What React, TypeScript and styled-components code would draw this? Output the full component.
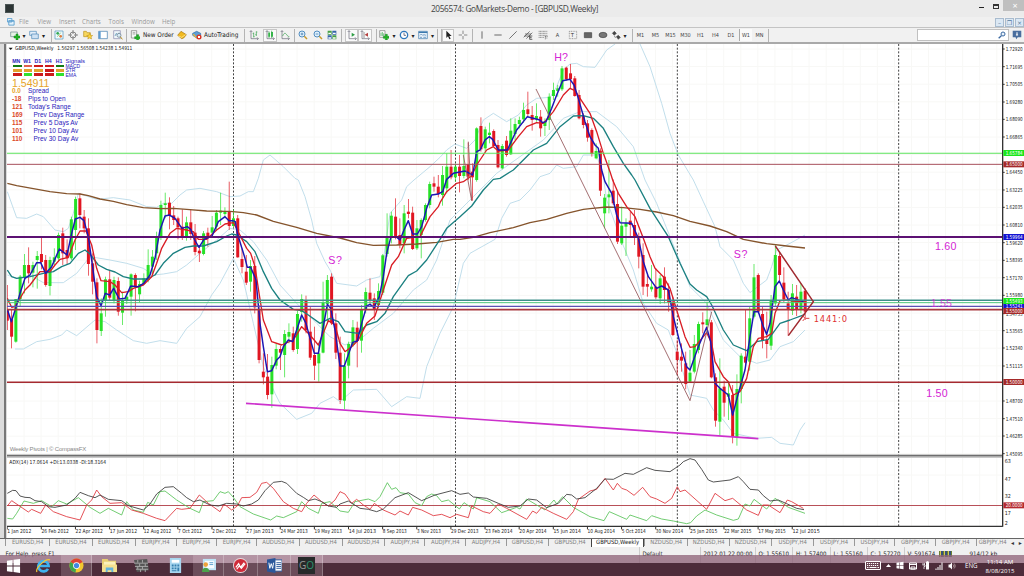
import React from 'react';
import styled, { createGlobalStyle } from 'styled-components';

type Bar = [number, number, number, number, number];
type Run = [number, number, string];

// chart units: 3 per css pixel
const STEP = 12.8;
const FIRST_BAR = 22;

// up(1)/down(0), high, body top, body bottom, low
const barRuns: { base: number; bars: Bar[] }[] = [
    {
        base: 450,
        bars: [
            [0, 405, 478, 512, 540], [0, 480, 508, 560, 595], [1, 447, 447, 575, 578], [1, 375, 380, 447, 468],
            [1, 312, 345, 382, 430], [0, 292, 345, 370, 400], [1, 335, 345, 368, 412], [1, 303, 318, 330, 416],
            [0, 263, 312, 336, 358], [0, 315, 330, 405, 410], [1, 320, 330, 408, 436], [1, 295, 322, 335, 345],
            [1, 248, 255, 325, 335], [0, 233, 250, 310, 345], [0, 268, 300, 325, 345], [1, 200, 208, 325, 330],
            [1, 140, 147, 240, 300], [0, 130, 145, 195, 235], [0, 180, 200, 235, 250], [0, 205, 235, 342, 377],
            [0, 310, 340, 395, 433], [0, 385, 397, 540, 580], [1, 445, 490, 543, 558], [1, 380, 388, 450, 500],
            [0, 362, 388, 443, 450], [1, 380, 390, 450, 460], [0, 382, 393, 485, 497], [1, 425, 450, 488, 525],
            [1, 430, 440, 450, 462], [1, 370, 373, 440, 497], [0, 370, 375, 412, 484], [1, 392, 402, 433, 458],
            [1, 370, 385, 402, 405], [1, 298, 345, 390, 397], [1, 300, 320, 350, 372], [1, 245, 262, 310, 330],
            [1, 152, 165, 262, 270], [1, 128, 160, 165, 205], [0, 142, 158, 195, 238], [0, 168, 196, 210, 225],
            [0, 200, 205, 232, 268], [0, 178, 230, 262, 270], [1, 200, 217, 262, 272], [0, 180, 217, 252, 270],
            [0, 222, 248, 306, 316], [0, 285, 302, 310, 336], [1, 243, 250, 312, 316], [0, 233, 248, 260, 290],
            [1, 198, 232, 248, 262], [1, 180, 188, 230, 240], [1, 128, 182, 188, 225], [1, 172, 186, 192, 205],
            [0, 95, 186, 228, 240], [1, 178, 205, 228, 232], [0, 195, 205, 322, 323],
        ],
    },
    {
        base: 540,
        bars: [
            [0, 205, 237, 261, 280], [0, 225, 275, 308, 315], [1, 240, 258, 305, 335], [0, 228, 258, 382, 400],
            [0, 375, 390, 540, 550], [0, 520, 575, 592, 613], [0, 522, 590, 645, 658], [1, 530, 555, 643, 683],
            [1, 490, 507, 557, 568], [0, 497, 507, 518, 570], [1, 450, 462, 525, 592], [1, 430, 456, 470, 490],
            [0, 440, 460, 510, 515], [1, 392, 402, 507, 522], [1, 343, 357, 396, 425], [0, 347, 362, 450, 460],
            [0, 380, 455, 533, 540], [0, 440, 525, 557, 600], [1, 490, 520, 550, 605], [1, 305, 367, 518, 520],
            [1, 285, 300, 372, 430], [0, 280, 290, 430, 435], [0, 400, 430, 518, 537], [0, 470, 518, 660, 672],
            [1, 520, 557, 662, 688], [1, 485, 492, 557, 595], [1, 420, 442, 495, 500], [0, 425, 443, 483, 562],
            [1, 375, 388, 482, 518], [1, 323, 336, 390, 400], [0, 295, 338, 360, 372], [0, 340, 355, 390, 420],
            [1, 310, 333, 375, 385], [1, 222, 226, 338, 345], [1, 100, 170, 222, 230], [1, 95, 107, 170, 190],
            [0, 55, 110, 168, 178], [0, 115, 165, 195, 205], [1, 75, 100, 190, 220], [0, 57, 95, 102, 115],
            [0, 80, 98, 207, 210], [1, 120, 145, 205, 210], [1, 115, 120, 165, 235], [1, 70, 75, 120, 125],
            [1, 5, 12, 75, 85], [0, -10, 10, 20, 35], [0, -15, 20, 42, 52],
        ],
    },
    {
        base: 120,
        bars: [
            [1, 378, 405, 465, 497], [1, 340, 380, 445, 460], [0, 330, 380, 412, 418], [1, 370, 380, 412, 425],
            [0, 345, 380, 408, 457], [1, 298, 378, 408, 415], [0, 308, 372, 410, 420], [0, 370, 395, 412, 482],
            [1, 262, 265, 420, 425], [0, 232, 258, 328, 335], [1, 260, 268, 325, 335], [1, 248, 278, 285, 310],
            [0, 268, 273, 318, 320], [0, 300, 315, 382, 385], [1, 312, 318, 385, 388], [0, 288, 302, 345, 350],
            [1, 235, 272, 343, 345], [1, 235, 252, 282, 300], [1, 230, 240, 252, 265], [1, 188, 210, 238, 248],
            [0, 155, 208, 222, 230], [0, 198, 225, 240, 272], [1, 190, 228, 238, 245], [0, 210, 230, 265, 290],
            [1, 235, 245, 258, 288], [1, 160, 170, 240, 270], [1, 128, 150, 168, 180], [1, 135, 145, 153, 170],
            [1, 78, 85, 148, 153], [0, 80, 83, 118, 122], [0, 72, 100, 118, 145], [0, 108, 115, 168, 170],
            [0, 150, 165, 235, 238], [0, 220, 228, 255, 265], [0, 240, 250, 293, 305], [0, 265, 270, 342, 350],
            [1, 310, 333, 355, 358], [0, 325, 332, 452, 468], [1, 462, 473, 520, 565], [1, 360, 463, 472, 520],
            [0, 418, 452, 490, 495],
        ],
    },
    {
        base: 540,
        bars: [
            [0, 32, 72, 185, 192], [1, 80, 137, 190, 195], [1, 115, 130, 140, 228], [0, 95, 122, 135, 170],
            [0, 90, 135, 168, 195], [0, 158, 175, 230, 265], [0, 190, 225, 320, 345], [0, 285, 312, 320, 350],
            [1, 255, 320, 328, 335], [0, 265, 320, 352, 358], [1, 285, 295, 355, 372], [0, 262, 290, 330, 370],
            [0, 310, 330, 367, 395], [0, 350, 365, 465, 468], [0, 480, 515, 540, 585], [0, 490, 530, 542, 575],
            [0, 515, 550, 612, 628], [1, 510, 578, 605, 608], [1, 465, 492, 575, 580], [1, 425, 432, 510, 520],
            [0, 397, 427, 433, 460], [1, 365, 418, 435, 460], [0, 420, 427, 592, 595], [0, 580, 592, 722, 740],
            [1, 535, 625, 725, 768], [0, 602, 620, 668, 710], [1, 605, 640, 650, 720], [0, 615, 645, 770, 790],
            [1, 583, 627, 772, 797], [1, 520, 527, 627, 670], [0, 390, 530, 548, 560], [1, 380, 415, 545, 572],
            [1, 252, 292, 410, 415], [0, 280, 285, 395, 400], [0, 380, 402, 482, 505], [0, 395, 480, 492, 535],
            [1, 345, 362, 497, 510], [1, 195, 225, 370, 378], [0, 215, 228, 285, 308], [0, 262, 308, 358, 367],
            [0, 335, 370, 390, 467], [1, 312, 340, 392, 405], [0, 315, 350, 390, 408], [1, 310, 335, 390, 400],
            [0, 325, 332, 395, 420],
        ],
    },
];

const brown: Run[] = [
    [0, 450, '22,100 50,107 100,116 150,125 200,131 240,132 265,137 300,147 340,154 380,164 430,173 480,176 520,175 560,178 620,183 680,184'],
    [690, 540, '0,94 40,98 80,105 130,124 200,142 260,160 330,174 380,188 430,196 500,195 560,192 620,187 670,178'],
    [1320, 120, '60,598 100,592 150,578 220,563 270,548 320,538 380,520 430,508'],
    [1770, 540, '0,86 50,81 100,83 150,88 200,96 250,107 300,124 360,138 410,155 460,178 530,191 590,198 645,204'],
];
const teal: Run[] = [
    [0, 450, '22,360 35,380 50,385 90,380 130,370 160,365 185,350 210,340 235,310 255,300 270,312 295,345 320,358 345,366 370,380 400,387 440,387 465,375 490,340 520,310 555,292 580,288 610,288 650,275 680,258'],
    [690, 540, '5,162 20,165 50,185 75,215 100,275 125,325 150,360 190,388 215,392 235,405 270,430 300,415 325,425 345,455 385,460 410,435 440,425 465,400 490,350 535,287 560,273 590,240'],
    [1320, 120, '0,598 20,565 60,530 95,498 130,450 160,418 180,415 220,390 250,360 280,330 320,310 360,260 400,228 430,227 460,235 490,265 520,320 550,370 575,405'],
    [1770, 540, '135,0 180,85 235,170 270,250 300,312 320,330 350,350 365,375 400,450 430,495 470,512 500,485 535,478 570,430 600,420 645,403'],
];
const red: Run[] = [
    [0, 450, '22,445 35,472 45,470 60,445 75,420 90,405 120,365 150,365 165,345 180,328 205,322 225,270 240,243 258,243 275,285 290,355 303,392 330,395 345,405 365,428 385,425 400,415 430,405 455,380 470,340 485,295 510,250 530,235 560,240 580,245 595,268 620,268 650,240 675,222 700,218 712,240 740,295 752,310 765,350'],
    [690, 540, '88,345 100,420 125,485 155,495 190,480 215,440 240,465 265,495 295,422 315,435 330,490 345,515 365,500 385,480 410,430 435,408 460,330 485,255 505,230 530,175 570,170 600,110 625,80'],
    [1320, 120, '0,488 20,455 50,430 70,425 95,407 110,375 140,330 160,320 175,333 205,330 235,290 260,260 290,248 310,250 340,215 370,165 390,145 405,152 430,190 450,220 470,275 490,340 510,395'],
    [1770, 540, '68,0 85,40 110,80 135,110 160,175 180,230 195,265 220,290 240,325 260,390 285,470 300,502 315,500 350,458 365,490 375,545 400,590 415,605 430,645 450,635 470,595 490,500 505,475 530,470 545,460 555,400 570,362 590,360 620,365 645,365'],
];
const blue: Run[] = [
    [0, 450, '22,478 34,515 47,475 60,430 75,385 90,375 110,338 122,338 137,370 155,350 178,297 201,315 215,250 226,207 240,202 252,212 265,260 277,345 290,440 303,467 316,430 329,435 341,415 358,447 375,445 392,408 415,410 431,400 450,375 465,325 480,240 495,198 508,195 525,205 546,235 562,230 572,238 584,270 597,292 612,268 636,258 655,215 675,200 687,212 698,212'],
    [690, 540, '16,125 22,160 45,235 52,262 62,262 78,300 90,430 100,500 112,575 125,572 140,540 150,530 160,500 175,480 188,485 200,450 215,405 228,430 240,475 253,520 265,520 280,440 292,373 302,385 315,450 330,558 343,558 368,487 382,483 395,430 410,378 420,373 432,382 448,350 460,290 470,220 483,170 498,170 510,180 522,150 535,122 548,162 562,162 575,140 590,85 605,45 625,42'],
    [1320, 120, '8,455 20,418 40,400 75,393 98,405 110,335 120,330 135,300 148,290 158,298 175,330 202,330 230,270 262,230 300,240 308,248 318,245 335,205 350,165 368,122 390,118 402,135 415,175 435,245 450,290 465,315 475,325 485,390'],
    [1770, 540, '45,5 65,40 80,105 90,128 125,130 145,175 160,245 175,290 200,325 215,318 235,330 250,410 270,490 290,560 300,570 325,500 350,442 362,485 375,610 390,625 415,645 428,705 445,640 465,570 480,470 492,395 505,395 520,440 530,463 540,430 555,320 568,303 580,330 595,360 605,353 640,365'],
];
const upperBand: Run[] = [
    [0, 450, '22,125 50,203 80,205 110,192 130,200 165,240 190,245 205,235 220,190 235,130 290,148 340,143 390,150 440,170 470,172 490,160 515,160 540,135 560,120 600,115 650,125 690,140 720,138 745,125 760,125 775,85 790,30 810,15 850,50 885,85'],
    [690, 540, '205,0 225,50 245,120 260,190 285,245 300,270 320,310 380,318 410,300 450,290 460,240 470,170 480,100 515,60 530,20 552,0'],
    [1320, 120, '-30,380 0,352 20,330 45,312 80,325 105,300 130,240 160,220 200,245 235,225 260,195 290,175 330,172 350,140 370,90 390,72 410,70 430,80 465,82 480,60 500,30 525,12 560,-20 600,12 630,80 665,190 690,280 715,345'],
    [1770, 540, '310,0 340,65 375,140 390,200 430,240 460,310 480,338 510,315 530,300 545,260 560,210 600,190 645,165'],
];
const middleBand: Run[] = [
    [0, 450, '22,375 50,385 90,375 130,398 190,398 230,370 270,320 330,330 380,340 430,355 460,375 490,372 530,365 560,345 600,310 650,270 690,235'],
    [690, 540, '30,150 70,185 110,240 150,315 200,370 260,430 300,470 345,495 400,470 430,445 490,400 550,330 590,300 620,240'],
    [1320, 120, '30,540 100,470 170,400 240,350 310,300 370,235 420,215 470,215 530,260 580,320'],
    [1770, 540, '165,0 200,70 240,170 300,320 350,370 400,480 450,530 500,550 540,540 570,500 610,485 645,450'],
];
const lowerBand: Run[] = [
    [0, 450, '45,597 70,597 110,575 150,568 185,555 200,540 230,557 285,510 315,515 350,540 400,572 440,580 480,572 530,580 560,535 600,500 635,435 660,400 700,325'],
    [690, 540, '40,300 70,430 100,560 135,640 150,670 200,718 245,700 270,670 310,650 330,665 370,630 440,628 485,680 530,650 570,655 590,560 630,460 670,380 700,250 720,220'],
    [1320, 120, '165,598 185,535 210,490 240,480 270,450 300,410 330,400 350,375 370,385 410,380 430,345 470,345 490,410 500,480'],
    [1770, 540, '95,185 130,270 160,370 200,430 235,450 265,530 300,645 350,655 370,690 400,720 430,760 500,775 545,772 570,790 610,795 630,750 645,728'],
];
const adxMain: Run[] = [
    [0, 1290, '22,190 38,181 48,182 60,198 75,202 90,203 105,212 125,215 145,230 165,232 200,225 225,205 240,187 265,197 285,203 300,195 325,208 365,212 385,227 430,240 450,222 470,192 495,172 520,170 545,190 560,203 580,215 600,210 630,225 655,228 680,220 710,222 730,228 755,222 775,210 795,182 820,157 845,154 860,160 890,190 910,202 925,212 945,207 965,215 985,228 1010,232'],
    [1020, 1290, '0,222 25,213 60,235 85,238 110,245 130,237 165,203 205,188 245,212 285,195 335,182 360,193 385,189 400,201 440,205 475,220 505,232 540,228 565,207 590,210 620,233 655,220 680,193 695,195 710,207 735,203 770,175 795,147 820,148 855,130 880,133 920,113 945,121 990,125 1020,105'],
    [2040, 1290, '10,95 30,86 45,90 65,118 85,150 100,156 150,150 175,140 190,155 210,178 235,180 250,197 270,213 295,210 320,221 350,235 372,239'],
];
const adxMinus: Run[] = [
    [0, 1290, '22,228 35,212 85,246 95,238 122,250 137,225 160,245 200,260 240,270 260,225 275,210 290,180 305,200 330,220 365,218 395,240 430,250 470,265 495,272 530,235 545,238 570,235 598,195 625,220 660,245 672,222 695,240 712,228 725,203 750,202 770,187 785,160 800,157 820,175 850,215 880,235 905,245 920,220 942,195 965,215 985,228 1005,210'],
    [1020, 1290, '0,185 15,192 35,220 50,208 70,225 90,238 103,220 130,240 165,255 180,243 205,255 218,232 245,240 280,257 305,253 330,263 350,253 385,263 395,228 430,245 450,250 475,222 500,235 560,268 578,243 590,250 605,232 640,250 680,268 700,245 715,208 750,183 770,178 795,145 820,180 832,160 845,175 860,180 882,196 908,172 930,200 950,207 975,220 995,205 1012,170'],
    [2040, 1290, '0,185 15,180 80,238 105,190 135,212 158,205 200,240 235,256 248,225 265,225 300,248 322,210 335,215 370,235'],
];
const adxPlus: Run[] = [
    [0, 1290, '22,265 38,267 50,250 72,213 100,220 125,212 155,230 175,212 200,222 235,203 270,232 300,250 325,235 365,255 380,215 400,240 430,247 443,217 460,225 480,185 495,183 530,210 570,235 598,248 610,215 640,212 660,185 675,190 685,185 700,202 720,230 760,252 812,270 830,258 850,263 890,245 905,215 925,235 955,250 965,220 990,215'],
    [1020, 1290, '0,243 25,247 45,215 85,207 105,215 120,200 142,158 155,178 168,173 180,188 205,192 225,218 245,227 260,200 275,192 290,197 305,215 325,210 358,237 372,218 400,237 410,203 450,215 485,248 530,232 540,237 560,207 590,225 615,240 642,210 650,222 668,200 700,232 750,260 792,272 808,245 860,268 870,255 920,272 935,257 965,267 1000,273'],
    [2040, 1290, '0,277 20,281 32,278 50,258 75,240 110,255 160,271 175,267 195,222 210,228 222,208 260,237 285,205 325,232 375,250'],
];

const levels = [
    { y: 460, color: '#5be35b', w: 3.2 },
    { y: 493, color: '#a8505c', w: 3 },
    { y: 711, color: '#5c1173', w: 6 },
    { y: 901, color: '#3f8f8a', w: 4.5 },
    { y: 908, color: '#4fc77a', w: 3 },
    { y: 919, color: '#5b50b4', w: 3.5 },
    { y: 929, color: '#a8383e', w: 5 },
    { y: 1147, color: '#a52a30', w: 4.5 },
];

const prices: [string, number][] = [
    ['1.72920', 147], ['1.71695', 200], ['1.70505', 253], ['1.69280', 306], ['1.68090', 358], ['1.66865', 411],
    ['1.64450', 517], ['1.63225', 570], ['1.62035', 622], ['1.60810', 675], ['1.59620', 728], ['1.58395', 781],
    ['1.57170', 833], ['1.55980', 886], ['1.54755', 941], ['1.53565', 992], ['1.52340', 1044], ['1.51115', 1098],
    ['1.48700', 1203], ['1.47510', 1256], ['1.46285', 1308], ['1.45095', 1361],
];
const priceTags: [string, number, string][] = [
    ['1.65784', 459, '#1ae61a'], ['1.65000', 493, '#a52a2a'], ['1.59964', 711, '#1414d2'], ['1.55241', 919, '#1414d2'],
    ['1.55000', 933, '#a52a2a'], ['1.55493', 903, '#1ae61a'], ['1.50000', 1146, '#a52a2a'], ['20.0000', 1516, '#b52a30'],
];
const adxScale: [string, number][] = [['63', 1383], ['47', 1438], ['32', 1489], ['17', 1540], ['2', 1569]];

const dates = [
    '1 Jan 2012', '26 Feb 2012', '22 Apr 2012', '17 Jun 2012', '12 Aug 2012', '7 Oct 2012', '2 Dec 2012', '27 Jan 2013',
    '24 Mar 2013', '19 May 2013', '14 Jul 2013', '8 Sep 2013', '3 Nov 2013', '29 Dec 2013', '23 Feb 2014', '20 Apr 2014',
    '15 Jun 2014', '10 Aug 2014', '5 Oct 2014', '30 Nov 2014', '25 Jan 2015', '22 Mar 2015', '17 May 2015', '12 Jul 2015',
];

const menu: [string, number][] = [
    ['File', 18.5], ['View', 21.5], ['Insert', 23], ['Charts', 26.5], ['Tools', 23], ['Window', 30.5], ['Help', 20],
];

const tabs: [string, number][] = [
    ['EURUSD,H4', 44.3], ['EURUSD,H4', 42.4], ['EURUSD,H4', 43], ['EURJPY,H4', 41], ['EURJPY,H4', 40.3], ['EURJPY,H4', 40.3],
    ['AUDUSD,H4', 43], ['AUDUSD,H4', 42.4], ['AUDUSD,H4', 42.6], ['AUDJPY,H4', 40], ['AUDJPY,H4', 41], ['AUDJPY,H4', 40.4],
    ['GBPUSD,H4', 42.6], ['GBPUSD,H4', 42.7], ['GBPUSD,Weekly', 53.3], ['NZDUSD,H4', 43], ['NZDUSD,H4', 42], ['NZDUSD,H4', 42],
    ['USDJPY,H4', 42], ['USDJPY,H4', 40.7], ['USDJPY,H4', 40.3], ['GBPJPY,H4', 40.4], ['GBPJPY,H4', 41], ['GBPJPY,H4', 33],
];

const signalColors = [
    ['#137a13', '#e0604c', '#cc1a1a', '#cc1a1a', '#137a13'],
    ['#e3a02c', '#e3a02c', '#e3a02c', '#cc1a1a', '#e3a02c'],
    ['#cc1a1a', '#2fe02f', '#cc1a1a', '#cc1a1a', '#2fe02f'],
];
const stats: [string, string, number][] = [
    ['0.0', 'Spread', 0], ['-18', 'Pips to Open', 0], ['121', "Today's Range", 0], ['169', 'Prev Days Range', 1],
    ['115', 'Prev 5 Days Av', 1], ['101', 'Prev 10 Day Av', 1], ['110', 'Prev 30 Day Av', 1],
];

const joinRuns = (runs: Run[]) =>
    runs
        .map(([dx, dy, pts]) =>
            pts.split(' ').map((p) => {
                const [x, y] = p.split(',').map(Number);
                return `${x + dx},${y + dy}`;
            }).join(' '))
        .join(' ');

const allBars = barRuns.flatMap(({ base, bars }) =>
    bars.map(([up, ...ys]) => ({ up, ys: ys.map((y) => y + base) })));

function Trace({ runs, color, width }: { runs: Run[]; color: string; width: number }) {
    return <polyline points={joinRuns(runs)} fill="none" stroke={color} strokeWidth={width} strokeLinejoin="round" />;
}

function Chart() {
    return (
        <ChartSvg viewBox="21 132 3051 1482">
            <defs>
                <clipPath id="main"><rect x="21" y="132" width="2985" height="1236" /></clipPath>
            </defs>
            <rect x="21" y="132" width="3051" height="1482" fill="#fff" />

            {Array.from({ length: 58 }, (_, i) => (
                <line key={i} x1={72 + i * 51.2} x2={72 + i * 51.2} y1="132" y2="1578" stroke="#f8f8f6" strokeWidth="3" />
            ))}
            {Array.from({ length: 24 }, (_, i) => (
                <line key={i} x1="21" x2="3006" y1={147 + i * 52.8} y2={147 + i * 52.8} stroke="#f8f8f6" strokeWidth="3" />
            ))}
            <line x1="21" x2="3006" y1="1425" y2="1425" stroke="#f8f8f6" strokeWidth="3" />

            {[700.5, 1366.5, 2032, 2696].map((x) => (
                <line key={x} x1={x} x2={x} y1="132" y2="1578" stroke="#444" strokeWidth="3" strokeDasharray="6 5" />
            ))}

            <g clipPath="url(#main)">
                <Trace runs={upperBand} color="#bcdcea" width={2.8} />
                <Trace runs={middleBand} color="#bcdcea" width={2.8} />
                <Trace runs={lowerBand} color="#bcdcea" width={2.8} />
                {allBars.map(({ up, ys: [high, top, bottom, low] }, i) => {
                    const x = FIRST_BAR + i * STEP;
                    return (
                        <g key={i} fill={up ? '#27e027' : '#e01622'}>
                            <rect x={x - 1.2} y={high} width="2.4" height={low - high} opacity=".85" />
                            <rect x={x - 4.5} y={top} width="9" height={bottom - top} />
                        </g>
                    );
                })}
                <Trace runs={brown} color="#85542c" width={4.2} />
                <Trace runs={teal} color="#1b8080" width={4} />
                <Trace runs={red} color="#d91c24" width={4} />
                <Trace runs={blue} color="#1c16b4" width={4.4} />
            </g>

            {levels.map((l) => (
                <line key={l.y} x1="21" x2="3006" y1={l.y} y2={l.y} stroke={l.color} strokeWidth={l.w} />
            ))}

            <g fill="none" stroke="#96585c" strokeWidth="2.6">
                <polyline points="1608,267 2070,1202 2135,935" />
                <polyline points="1390,465 1415,602 1405,425" />
                <polyline points="2326,738 2440,905 2365,1007" stroke="#a02a30" strokeWidth="4.500" />
            </g>
            <line x1="738" y1="1210" x2="2275" y2="1316" stroke="#cc30cc" strokeWidth="4.800" />
            <path d="M2408 947l7 8-7 8M2418 955h10" fill="none" stroke="#d94040" strokeWidth="3" />

            <Note x="1663" y="183" textLength="41">H?</Note>
            <Note x="985" y="791" textLength="41">S?</Note>
            <Note x="2201" y="773" textLength="41">S?</Note>
            <Note x="2805" y="751" textLength="64">1.60</Note>
            <Note x="2792" y="921" textLength="64" style={{ opacity: 0.75 }}>1.55</Note>
            <Note x="2779" y="1190" textLength="64">1.50</Note>
            <Countdown x="2441" y="966" textLength="100">1441:0</Countdown>

            <rect x="21" y="1364" width="2987" height="6" fill="#6e6e6e" />
            <rect x="21" y="1370" width="2987" height="4" fill="#c9c9c9" />
            <line x1="21" x2="3006" y1="1516.500" y2="1516.500" stroke="#b85058" strokeWidth="3.500" />
            <Trace runs={adxPlus} color="#5cc45c" width={2.6} />
            <Trace runs={adxMinus} color="#e0363e" width={2.6} />
            <Trace runs={adxMain} color="#3a3a3a" width={2.6} />

            <path d="M3008 132V1580M21 1579H3008" stroke="#333" strokeWidth="4" fill="none" />
            {prices.map(([label, y]) => (
                <g key={label}>
                    <rect x="3008" y={y - 1.5} width="6" height="3" fill="#333" />
                    <Small x="3017" y={y + 6} textLength="51" lengthAdjust="spacingAndGlyphs">{label}</Small>
                </g>
            ))}
            {priceTags.map(([label, y, color]) => (
                <g key={label}>
                    <rect x="3010" y={y - 9} width="62" height="18" fill={color} />
                    <TagText x="3017" y={y + 6} textLength="51" lengthAdjust="spacingAndGlyphs">{label}</TagText>
                </g>
            ))}
            {adxScale.map(([label, y]) => (
                <Small key={label} x="3014" y={y + 6}>{label}</Small>
            ))}

            {dates.map((d, i) => (
                <g key={d}>
                    <rect x={20 + i * 102.4} y="1580" width="3" height="8" fill="#333" />
                    <Small x={22 + i * 102.4} y="1600" textLength={d.length === 11 ? 82 : 72} lengthAdjust="spacingAndGlyphs">{d}</Small>
                </g>
            ))}

            <path d="M26 143h12l-6 7z" fill="#111" />
            <Small x="45" y="151" textLength="116" lengthAdjust="spacingAndGlyphs">GBPUSD,Weekly</Small>
            <Small x="172" y="151" textLength="225" lengthAdjust="spacingAndGlyphs">1.56297 1.56508 1.54238 1.54911</Small>
            <Small x="28" y="1391" textLength="290" lengthAdjust="spacingAndGlyphs">ADX(14) 17.0614 +DI:13.0338 -DI:18.3164</Small>
            <Credit x="29" y="1354" textLength="230">Weekly Pivots | © CompassFX</Credit>
        </ChartSvg>
    );
}

function Signals() {
    return (
        <SignalsBox>
            <SignalRow>
                {['MN', 'W1', 'D1', 'H4', 'H1'].map((t) => <SignalHead key={t}>{t}</SignalHead>)}
                <SignalTitle>Signals</SignalTitle>
            </SignalRow>
            {['MACD', 'STR', 'EMA'].map((name, r) => (
                <SignalLine key={name}>
                    {signalColors[r].map((c, i) => <SignalChip key={i} $color={c} />)}
                    <SignalName>{name}</SignalName>
                </SignalLine>
            ))}
            <BigPrice>1.54911</BigPrice>
            {stats.map(([value, label, indent], i) => (
                <StatRow key={label}>
                    <StatValue $first={i === 0}>{value}</StatValue>
                    <StatLabel $indent={indent}>{label}</StatLabel>
                </StatRow>
            ))}
        </SignalsBox>
    );
}

const green = '#2f9e46';
const plus = <path d="M8 5h3v3h3v3h-3v3H8v-3H5V8h3z" fill="#22b322" stroke="#0d8420" strokeWidth=".7" />;
const axes = <path d="M3 1v12h11M1 3l2-2 2 2M12 11l2 2-2 2" fill="none" stroke="#667" strokeWidth="1" />;

const glyphs: Record<string, React.ReactNode> = {
    newChart: <><path d="M1 3h10v7H1z" fill="#e6f2e6" stroke="#688" /><g transform="translate(1 1)">{plus}</g></>,
    profiles: <><path d="M1 2h10v6H1z" fill="#e2eefa" stroke="#4a86b8" /><path d="M4 6h10v7H4z" fill="#cfe2f4" stroke="#4a86b8" /></>,
    market: <><path d="M1.500 1.500h12v12h-12z" fill="#f2fbff" stroke="#4a92b8" /><circle cx="5.500" cy="5" r="2" fill="#32a852" /><circle cx="10" cy="9.500" r="2" fill="#dd7a3a" /><path d="M5 10l5-6" stroke="#48b048" /></>,
    crosshair: <><circle cx="7.500" cy="7.500" r="4.500" fill="none" stroke="#555" /><path d="M7.500 0v6M7.500 9v6M0 7.500h6M9 7.500h6" stroke="#555" /></>,
    folder: <><path d="M1 2h4l1 2h5v6H1z" fill="#f7d65c" stroke="#b98f1c" /><path d="M10 5l1.300 3 3.200.3-2.500 2 .8 3.200L10 12l-2.800 1.500.8-3.200-2.500-2L8.700 8z" fill="#ffd53d" stroke="#b98f1c" strokeWidth=".8" /></>,
    terminal: <><path d="M1 2h13v11H1z" fill="#fff" stroke="#3b78ad" /><path d="M1 2h3v11H1z" fill="#5d9bd0" /></>,
    tester: <><path d="M1 1h10v12H1z" fill="#eef5fa" stroke="#88a" /><path d="M3 9l2-4 2 3 2-4" fill="none" stroke="#48a" /><circle cx="9" cy="8" r="3" fill="#d6ebf7" stroke="#678" /><path d="M11 10l3 4" stroke="#b98f1c" strokeWidth="1.500" /></>,
    order: <><path d="M2 1h8v11H2z" fill="#f5f8f5" stroke="#777" /><path d="M4 4h4M4 6h4" stroke="#888" /><g transform="translate(2 2)">{plus}</g></>,
    gold: <><path d="M1 8l5-6 8 5-4 5-3 1z" fill="#f1b91e" stroke="#a3720c" /><path d="M2 9l5 2 6-4" fill="none" stroke="#fff0a8" /></>,
    auto: <><path d="M1 5l6-3 6 3v3l-6 4-6-4z" fill="#5c9ed4" stroke="#2e6ca3" /><path d="M2 6c3 5 6 6 8 6" stroke="#e8b83b" strokeWidth="2" fill="none" /><circle cx="10.500" cy="10.500" r="3.800" fill="#d93324" /><path d="M9 9h3v3H9z" fill="#fff" /></>,
    bars: <>{axes}<path d="M7 4v7M5.500 5H7M7 10h1.500M11 2v7M9.500 7H11M11 3h1.500" stroke={green} fill="none" /></>,
    candle: <>{axes}<path d="M6 2v10M10 1v11" stroke={green} /><path d="M5 4h2.500v6H5zM9 3h3v7H9z" fill="#35b44a" /></>,
    line: <>{axes}<path d="M4 9c2-5 4-5 6-2 1 2 3 3 4 3" stroke={green} fill="none" /></>,
    zoomIn: <><circle cx="6" cy="6" r="4.500" fill="#dff0fd" stroke="#3e7fb8" strokeWidth="1.300" /><path d="M4 6h4M6 4v4" stroke="#2e6ca3" /><path d="M9.500 9.500l4 4" stroke="#c79a2c" strokeWidth="2.200" /></>,
    zoomOut: <><circle cx="6" cy="6" r="4.500" fill="#dff0fd" stroke="#3e7fb8" strokeWidth="1.300" /><path d="M4 6h4" stroke="#2e6ca3" /><path d="M9.500 9.500l4 4" stroke="#c79a2c" strokeWidth="2.200" /></>,
    tile: <><path d="M1 1h6v6H1zM8 8h6v6H8z" fill="#45a045" /><path d="M8 1h6v6H8zM1 8h6v6H1z" fill="#3467a8" /><path d="M2 4h4v2H2zM9 4h4v2H9zM2 11h4v2H2zM9 11h4v2H9z" fill="#fff" /></>,
    scroll: <>{axes}<path d="M7 4l5 3-5 3z" fill={green} /></>,
    shift: <>{axes}<path d="M12 4L7 7l5 3z" fill="#b64040" /><path d="M6 3v9" stroke="#666" /></>,
    indicator: <><path d="M1 1h8v10H1z" fill="#fff" stroke="#777" /><path d="M3 9V4M5 9V3M7 9V5" stroke={green} /><g transform="translate(1.500 1.500)">{plus}</g></>,
    clock: <><circle cx="7.500" cy="7.500" r="6.500" fill="#2f77bc" /><circle cx="7.500" cy="7.500" r="4.500" fill="#fff" /><path d="M7.500 4v4h3" stroke="#335" fill="none" /></>,
    template: <><path d="M1 2h13v11H1z" fill="#e8f2fa" stroke="#3b78ad" /><path d="M1 3.500h13" stroke="#3b78ad" strokeWidth="2" /><path d="M3 8l2-2 2 2 2-1 3 1M3 11h3M8 11h4" stroke="#47a" fill="none" /></>,
    cursor: <path d="M5 1v11l2.500-2.500L9.500 14l2-1-2-4H13z" fill="#222" />,
    cross: <path d="M7.500 1v5M7.500 9v5M1 7.500h5M9 7.500h5" stroke="#555" />,
    vline: <path d="M7.500 2v11" stroke="#555" strokeWidth="1.300" />,
    hline: <path d="M2 7.500h11" stroke="#555" strokeWidth="1.300" />,
    trend: <path d="M2 13L13 2" stroke="#555" strokeWidth="1.200" />,
    channel: <><path d="M1 11l9-9M5 13l9-9M3 6h9M2 9h9" stroke="#444" /><path d="M10 9h4M10 11.500h3M10 14h4M10 9v5" stroke="#222" /></>,
    fibo: <path d="M1 2h13M1 5h13M1 8h13M1 11h8M11 9v5M11 9.500h4M11 12h3" stroke="#555" strokeDasharray="1.500 .6" />,
    label: <path d="M2 2h11v11H2z" stroke="#777" fill="none" strokeDasharray="1.500 1" />,
    rect: <path d="M2 4h11v7.500H2z" fill="#666" stroke="#444" />,
    ellipse: <ellipse cx="7.500" cy="7.500" rx="6" ry="4" fill="#777" stroke="#444" />,
    arrows: <path d="M2 5l3-3 3 3-3 3zM8 10l3-2 3 3-3 3zM5 9l2 3" fill="#444" stroke="#444" strokeWidth=".8" />,
};

type Tool = { icon?: string; w: number; on?: boolean; text?: string; kind?: 'sep' | 'caret' | 'space' | 'label' | 'period' };
const sep = (w: number): Tool => ({ kind: 'sep', w });
const caret = (w: number): Tool => ({ kind: 'caret', w });
const tool = (icon: string, w: number, on = false): Tool => ({ icon, w, on });
const period = (text: string, w: number, on = false): Tool => ({ kind: 'period', text, w, on });

const tools: Tool[] = [
    tool('newChart', 13), caret(6), tool('profiles', 14), caret(5), sep(6),
    tool('market', 13), tool('crosshair', 15), tool('folder', 15), tool('terminal', 15), tool('tester', 15), sep(2),
    tool('order', 16), { kind: 'label', text: 'New Order', w: 31 }, tool('gold', 16), tool('auto', 14),
    { kind: 'label', text: 'AutoTrading', w: 37 }, sep(4),
    tool('bars', 18), tool('candle', 14, true), tool('line', 16), sep(2),
    tool('zoomIn', 15), tool('zoomOut', 15), tool('tile', 14), sep(3),
    { kind: 'space', w: 3 }, tool('scroll', 13, true), tool('shift', 14, true), sep(5),
    tool('indicator', 14), caret(6), tool('clock', 13), caret(6), tool('template', 14), caret(5), sep(3), sep(4),
    tool('cursor', 12, true), tool('cross', 17), sep(2),
    tool('vline', 17), tool('hline', 15), tool('trend', 15), tool('channel', 15), tool('fibo', 15),
    period('A', 15), tool('label', 15), tool('rect', 15), tool('ellipse', 15), tool('arrows', 12), caret(6), sep(5),
    period('M1', 15), period('M5', 15), period('M15', 15), period('M30', 15), period('H1', 15), period('H4', 15),
    period('D1', 16), period('W1', 13, true), period('MN', 15), sep(2),
];

function Toolbar() {
    return (
        <ToolbarRow>
            {tools.map((t, i) => {
                if (t.kind === 'sep') return <Separator key={i} $w={t.w} />;
                if (t.kind === 'space') return <Slot key={i} $w={t.w} />;
                if (t.kind === 'caret') return <CaretSlot key={i} $w={t.w}>▾</CaretSlot>;
                if (t.kind === 'label') return <ToolLabel key={i} $w={t.w}>{t.text}</ToolLabel>;
                if (t.kind === 'period') return <Period key={i} $w={t.w} $on={t.on}>{t.text}</Period>;
                return (
                    <ToolButton key={i} $w={t.w} $on={t.on}>
                        <svg width="10" height="10" viewBox="0 0 15 15">{glyphs[t.icon!]}</svg>
                        {t.icon === 'label' && <LabelT>T</LabelT>}
                    </ToolButton>
                );
            })}
            <SearchBox>
                <svg width="8" height="8" viewBox="0 0 12 12"><circle cx="7.500" cy="4.500" r="3" fill="#eaf4fc" stroke="#3a68a0" strokeWidth="1.500" /><path d="M5 7l-4 4" stroke="#3a68a0" strokeWidth="2" /></svg>
            </SearchBox>
            <Chat>
                <svg width="10" height="10" viewBox="0 0 14 14"><path d="M1 1h12v9H8l-2 3-1-3H1z" fill="#4a6e9e" /><path d="M7 3v4M5.500 7h3" stroke="#fff" strokeWidth="1.500" /></svg>
            </Chat>
        </ToolbarRow>
    );
}

const windowsLogo = <path d="M1 3l6-1v6H1zM8 1.800L15 1v7H8zM1 9h6v6l-6-1zM8 9h7v7l-7-1z" fill="#fff" />;

const taskApps: { w: number; on?: boolean; art: React.ReactNode }[] = [
    { w: 26, art: windowsLogo },
    { w: 35, art: <><path d="M12.800 11.500A5.500 5.500 0 1 1 13.500 8.500H4" fill="none" stroke="#3fb2ee" strokeWidth="2.800" /><path d="M1 15C-1 11 10 0 15 2" fill="none" stroke="#f0c63a" strokeWidth="1.300" /></> },
    { w: 31, on: true, art: <><circle cx="8" cy="8" r="7.500" fill="#f2c830" /><path d="M8 8L1.500 4.300A7.500 7.500 0 0 1 14.500 4.300z" fill="#dd4435" /><path d="M8 8L1.500 4.300A7.500 7.500 0 0 0 7 15.500z" fill="#3ea64c" /><circle cx="8" cy="8" r="3.600" fill="#fff" /><circle cx="8" cy="8" r="2.800" fill="#4287e0" /></> },
    { w: 34, art: <><path d="M0 1h6l1 2h8v11H0z" fill="#e9cf72" /><path d="M2 4h12v6H2z" fill="#fbf1bb" /><path d="M0 7h16v8H0z" fill="#f5e08e" /><path d="M4 10h8v5h-2v-2H6v2H4z" fill="#63b4dc" /></> },
    { w: 31, art: <><path d="M0 2l14-1 2 12-13 2z" fill="#555" /><path d="M0 5.500h15M1 9h14M2 12h13M4 2v3M9 2v3M6 6v3M12 6v3M4 9v3M9 9v3M7 12v3M12 12v3" stroke="#aaa" /></> },
    { w: 36, art: <><path d="M2 0h12v16H2z" fill="#a8d6ef" /><path d="M4 2h8v3H4z" fill="#fff" /><path d="M4 7h2v2H4zM7 7h2v2H7zM10 7h2v2h-2zM4 10h2v2H4zM7 10h2v2H7zM10 10h2v4h-2zM4 13h5v1H4z" fill="#367fae" /></> },
    { w: 31, on: true, art: <><path d="M2 1h14v12H2z" fill="#bfe4f6" /><path d="M4 3h10v8H4z" fill="#f6fcff" /><path d="M9 5h4M9 7h4" stroke="#5aa0cc" /><circle cx="5" cy="7" r="2.500" fill="#eda33c" /><path d="M1 15c0-6 8-6 8 0z" fill="#4ba34a" /></> },
    { w: 34, on: true, art: <><circle cx="8" cy="8" r="8" fill="#e9d9dc" /><circle cx="8" cy="8" r="7" fill="#cf2c3a" /><path d="M3 10l3-4 2 4 4-5M4 12l3-4 2 3 4-5" fill="none" stroke="#fff" strokeWidth="1.300" /></> },
    { w: 33, on: true, art: <><path d="M7 2h9v12H7z" fill="#fff" stroke="#2b579a" /><path d="M10 5h5M10 7h5M10 9h5M10 11h5" stroke="#2b579a" /><path d="M0 1.500L9 0v16l-9-1.500z" fill="#2b579a" /><path d="M2 5l1 6 1.500-5L6 11l1-6" fill="none" stroke="#fff" /></> },
    { w: 32, on: true, art: null },
];

function Taskbar() {
    return (
        <TaskbarRow>
            {taskApps.map((a, i) => (
                <TaskSlot key={i} $w={a.w} $on={a.on}>
                    {a.art ? <svg width="15" height="15" viewBox="0 0 16 16">{a.art}</svg> : <GoLogo>G<b>O</b></GoLogo>}
                </TaskSlot>
            ))}
            <Tray>
                <svg width="16" height="9" viewBox="0 0 32 18"><rect x="1" y="1" width="30" height="16" rx="1" fill="#6a4452" stroke="#fff" strokeWidth="2" /><path d="M4 5h24M4 9h24" stroke="#fff" strokeWidth="2.400" strokeDasharray="2.400 1.600" /><path d="M4 13h3M9 13h14M25 13h3" stroke="#fff" strokeWidth="2.400" /></svg>
                <svg width="5" height="4" viewBox="0 0 5 4"><path d="M0 3h5L2.500 0z" fill="#fff" /></svg>
                <svg width="8" height="9" viewBox="0 0 16 17">{windowsLogo}</svg>
                <svg width="8" height="8" viewBox="0 0 16 16"><path d="M1 2h14v12H1z" fill="none" stroke="#fff" strokeWidth="2" /><path d="M1 5h14M4 10h8v4H4z" stroke="#fff" strokeWidth="2" fill="none" /></svg>
                <svg width="8" height="9" viewBox="0 0 16 18"><path d="M8 2h6v15H8z" fill="#fff" /><path d="M10 0h2v2h-2zM2 4v4M5 4v4M1 8h5v3H4v5" stroke="#fff" strokeWidth="1.500" fill="none" /></svg>
                <svg width="8" height="8" viewBox="0 0 16 16"><path d="M1 13h2v3H1zM5 10h2v6H5zM9 6h2v10H9zM13 1h2v15h-2z" fill="#fff" /></svg>
                <svg width="8" height="8" viewBox="0 0 16 16"><path d="M1 5h3l4-4v14l-4-4H1z" fill="#fff" /><path d="M10 5c2 2 2 4 0 6M12 3c3 3 3 7 0 10" stroke="#cbb" fill="none" strokeWidth="1.500" /></svg>
                <Lang>ENG</Lang>
                <Clock><span>11:14 AM</span><span>8/08/2015</span></Clock>
            </Tray>
        </TaskbarRow>
    );
}

function App() {
    return (
        <Screen>
            <GlobalStyle />
            <TitleBar>
                <AppIcon />
                <Title>2056574: GoMarkets-Demo - [GBPUSD,Weekly]</Title>
                <WindowButtons>
                    <MinButton />
                    <MaxButton />
                    <CloseButton>×</CloseButton>
                </WindowButtons>
            </TitleBar>
            <MenuBar>
                <MenuIcon viewBox="0 0 9 9"><path d="M.5.500h5v4h-5zM2 3h6v5H2z" fill="#e4f1fb" stroke="#5a9fd0" /><path d="M2 3.500h6" stroke="#5a9fd0" /></MenuIcon>
                {menu.map(([label, w]) => <MenuItem key={label} $w={w}>{label}</MenuItem>)}
                <MdiButtons>
                    <MdiButton>–</MdiButton>
                    <MdiButton>❐</MdiButton>
                    <MdiButton>×</MdiButton>
                </MdiButtons>
            </MenuBar>
            <Toolbar />
            <ChartFrame>
                <Chart />
                <Signals />
            </ChartFrame>
            <TabBar>
                {tabs.map(([label, w], i) => <Tab key={i} $w={w} $on={label === 'GBPUSD,Weekly'}>{label}</Tab>)}
                <TabArrows><span>◂</span><b>▸</b></TabArrows>
            </TabBar>
            <StatusBar>
                <HelpText>For Help, press F1</HelpText>
                <StatusCell $w={61}>Default</StatusCell>
                <StatusCell $w={55}>2012.01.22 00:00</StatusCell>
                <StatusCell $w={37.5}>O: 1.55610</StatusCell>
                <StatusCell $w={37.5}>H: 1.57400</StatusCell>
                <StatusCell $w={37}>L: 1.55160</StatusCell>
                <StatusCell $w={37}>C: 1.57270</StatusCell>
                <StatusCell $w={35}>V: 591674</StatusCell>
                <Traffic />
                <Kb>914/12 kb</Kb>
            </StatusBar>
            <Taskbar />
        </Screen>
    );
}

export default App

const GlobalStyle = createGlobalStyle`
    *{
        box-sizing:border-box;
    }
    body{
        margin:0;
        overflow:hidden;
    }
`

const uiFont = `"DejaVu Sans Condensed", "DejaVu Sans", sans-serif`

const Screen = styled.div`
    width:1024px;
    height:576px;
    display:flex;
    flex-direction:column;
    background-color:#f0f0f0;
    font-family:"Open Sans", sans-serif;
    overflow:hidden;
    white-space:nowrap;
`

const TitleBar = styled.div`
    display:grid;
    grid-template-columns:100px 1fr 100px;
    height:17px;
    flex:none;
    background-color:#ebebeb;
    padding-left:5px;
`

const AppIcon = styled.div`
    width:9px;
    height:9px;
    margin-top:3.5px;
    background-color:#2c3434;
    border:1px solid #4a5454;
`

const Title = styled.div`
    text-align:center;
    font-size:8.3px;
    letter-spacing:-.34px;
    line-height:17px;
    color:#444;
`

const WindowButtons = styled.div`
    display:flex;
    align-items:flex-start;
    justify-content:flex-end;
`

const MinButton = styled.div`
    width:5px;
    height:1.5px;
    margin:6.5px 9px 0 0;
    background-color:#222;
`

const MaxButton = styled.div`
    width:6px;
    height:5px;
    margin:3.5px 4px 0 0;
    border:1px solid #333;
    border-top-width:2px;
`

const CloseButton = styled.div`
    width:21px;
    height:11px;
    background-color:#bfbfbf;
    color:#fff;
    font-size:9px;
    line-height:11px;
    text-align:center;
    padding-left:3px;
`

const MenuBar = styled.div`
    display:flex;
    align-items:center;
    height:10px;
    flex:none;
    padding-left:7px;
    background-color:#f0f0f0;
`

const MenuIcon = styled.svg`
    width:8px;
    height:8px;
    margin-right:4px;
`

const MenuItem = styled.div<{ $w: number }>`
    width:${(props) => props.$w}px;
    font-size:6.2px;
    line-height:10px;
    color:#999;
`

const MdiButtons = styled.div`
    display:flex;
    gap:1px;
    margin-left:auto;
`

const MdiButton = styled.div`
    width:9px;
    height:9px;
    font-family:"DejaVu Sans", sans-serif;
    font-size:6px;
    line-height:8px;
    text-align:center;
    color:#567a9c;
    background-color:#dbe8f4;
    border:.5px solid #a9bccf;
`

const ToolbarRow = styled.div`
    display:flex;
    align-items:center;
    height:15px;
    flex:none;
    padding-left:8px;
    background-color:#f1f1f1;
    border-top:1px solid #c4c4c4;
    overflow:hidden;
`

const Slot = styled.div<{ $w: number }>`
    width:${(props) => props.$w}px;
    flex:none;
`

const Separator = styled(Slot)`
    height:13px;
    border-right:1px solid #b4b4b4;
`

const CaretSlot = styled(Slot)`
    font-family:"DejaVu Sans", sans-serif;
    font-size:6px;
    line-height:13px;
    text-align:center;
    color:#222;
`

const ToolLabel = styled(Slot)`
    font-family:${uiFont};
    font-size:6.4px;
    line-height:13px;
    color:#222;
`

const ToolButton = styled(Slot)<{ $on?: boolean }>`
    position:relative;
    display:flex;
    align-items:center;
    justify-content:center;
    height:13px;
    background-color:${(props) => (props.$on ? '#fafafa' : 'transparent')};
    border:${(props) => (props.$on ? '.5px solid #c6c6c6' : 'none')};
`

const LabelT = styled.span`
    position:absolute;
    font-size:6px;
    color:#333;
`

const Period = styled(Slot)<{ $on?: boolean }>`
    height:12px;
    font-family:${uiFont};
    font-size:5.5px;
    line-height:13px;
    text-align:center;
    color:#444;
    background-color:${(props) => (props.$on ? '#fafafa' : 'transparent')};
    border-left:${(props) => (props.$on ? '1px solid #aaa' : 'none')};
`

const SearchBox = styled.div`
    display:flex;
    align-items:center;
    justify-content:flex-end;
    width:92px;
    height:12px;
    margin-left:auto;
    padding-right:2px;
    background-color:#fff;
    border:1px solid #c0c0c0;
`

const Chat = styled.div`
    display:flex;
    justify-content:center;
    width:15px;
`

const ChartFrame = styled.div`
    position:relative;
    height:496px;
    flex:none;
    padding-left:4px;
    background-color:#dcdcdc;
    border-top:2px solid #a9a9a9;
`

const ChartSvg = styled.svg`
    display:block;
    width:1020px;
    height:494px;
    padding-left:1px;
    border-left:2px solid #777;
`

const Small = styled.text`
    font-family:${uiFont};
    font-size:16px;
    fill:#222;
`

const TagText = styled(Small)`
    fill:#fff;
`

const Note = styled.text`
    font-family:"Liberation Sans", sans-serif;
    font-size:32px;
    fill:#d424d4;
`

const Countdown = styled.text`
    font-family:"DejaVu Sans", sans-serif;
    font-size:25px;
    fill:#e03030;
`

const Credit = styled.text`
    font-family:"Liberation Sans", sans-serif;
    font-size:18px;
    fill:#888;
`

const SignalsBox = styled.div`
    position:absolute;
    left:12px;
    top:13px;
    font-family:"Liberation Sans", sans-serif;
    color:#2a22bc;
`

const SignalRow = styled.div`
    display:flex;
    align-items:center;
    height:7px;
`

const SignalHead = styled.div`
    width:10.7px;
    font-size:5.2px;
    font-weight:700;
    text-align:center;
    padding-right:2px;
`

const SignalTitle = styled.div`
    font-size:6px;
`

const SignalLine = styled.div`
    display:flex;
    align-items:center;
    height:4.3px;
    padding-left:1px;
`

const SignalChip = styled.div<{ $color: string }>`
    width:8.7px;
    height:2.7px;
    margin-right:2px;
    background-color:${(props) => props.$color};
`

const SignalName = styled.div`
    margin-left:-1px;
    font-size:5px;
    line-height:4px;
`

const BigPrice = styled.div`
    height:10px;
    font-size:10.6px;
    line-height:12px;
    color:#e6a42a;
`

const StatRow = styled.div`
    display:flex;
    height:8px;
    font-size:6.5px;
    line-height:8px;
`

const StatValue = styled.div<{ $first?: boolean }>`
    width:16px;
    color:${(props) => (props.$first ? '#e6a42a' : '#dc4a2a')};
    font-weight:700;
    font-size:6.4px;
`

const StatLabel = styled.div<{ $indent: number }>`
    padding-left:${(props) => (props.$indent ? 5.5 : 0)}px;
`

const TabBar = styled.div`
    display:flex;
    height:9px;
    flex:none;
    padding-left:5px;
    border-top:1px solid #666;
    background-color:#f0f0f0;
`

const Tab = styled.div<{ $w: number; $on: boolean }>`
    width:${(props) => props.$w}px;
    height:${(props) => (props.$on ? 9 : 7)}px;
    flex:none;
    overflow:hidden;
    font-family:${uiFont};
    font-size:5.9px;
    line-height:7.5px;
    text-align:center;
    color:${(props) => (props.$on ? '#222' : '#808080')};
    background-color:${(props) => (props.$on ? '#fff' : 'transparent')};
    border:${(props) => (props.$on ? '1px solid #444' : 'none')};
    border-top:none;
    border-left:1px solid ${(props) => (props.$on ? '#444' : '#999')};
`

const TabArrows = styled.div`
    display:flex;
    justify-content:space-around;
    flex:1;
    font-family:"DejaVu Sans", sans-serif;
    font-size:6px;
    line-height:8px;
    color:#333;
`

const StatusBar = styled.div`
    display:flex;
    height:16px;
    flex:none;
    padding:0 4px 0 5.5px;
    font-family:${uiFont};
    font-size:6.1px;
    line-height:14px;
    color:#222;
    background-color:#f0f0f0;
`

const HelpText = styled.div`
    width:633px;
`

const StatusCell = styled(Slot)`
    padding-left:3px;
    border-left:1px solid #ccc;
`

const Traffic = styled.div`
    width:13px;
    height:6px;
    margin:4px 18px 0 0;
    background:repeating-linear-gradient(90deg, #6b7f2e 0 1.5px, #d5c850 1.5px 2.5px, #35507a 2.5px 4px);
`

const Kb = styled.div`
    width:34px;
`

// translucent strip on top lets the status bar text show through
const TaskbarRow = styled.div`
    position:relative;
    display:flex;
    align-items:center;
    height:21px;
    flex:none;
    margin-top:-8px;
    background:linear-gradient(rgba(144,101,122,.78) 8.5px, #4d2c3a 8.5px);
`

const TaskSlot = styled(Slot)<{ $on?: boolean }>`
    display:flex;
    align-items:center;
    justify-content:center;
    height:21px;
    background-color:${(props) => (props.$on ? 'rgba(255,235,245,.17)' : 'transparent')};
    border-right:${(props) => (props.$on ? '1px solid rgba(255,255,255,.25)' : 'none')};
`

const GoLogo = styled.div`
    width:17px;
    height:17px;
    font-size:10px;
    line-height:16px;
    text-align:center;
    color:#999;
    background-color:#262a2a;
    b{
        font-weight:400;
        color:#2f9470;
    }
`

const Tray = styled.div`
    display:flex;
    align-items:center;
    gap:5px;
    margin-left:auto;
    padding-right:10px;
    color:#fff;
`

const Lang = styled.div`
    width:13px;
    font-size:6.2px;
    margin-left:4px;
`

const Clock = styled.div`
    display:flex;
    flex-direction:column;
    align-items:center;
    width:28px;
    margin-left:3px;
    font-size:6.1px;
    line-height:9px;
`
